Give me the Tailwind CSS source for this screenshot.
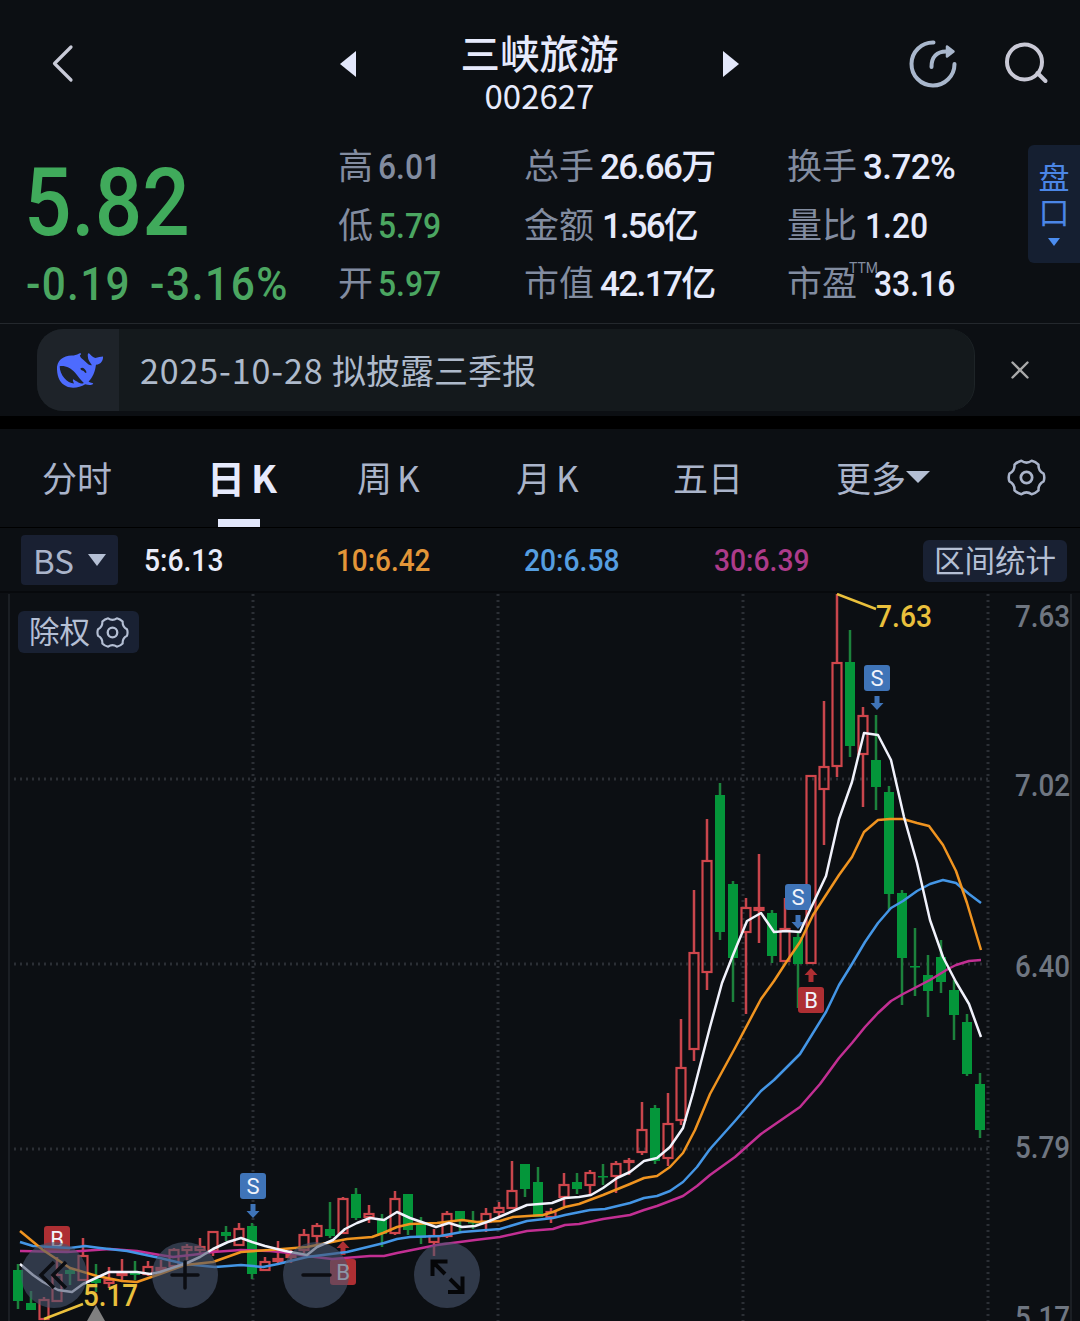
<!DOCTYPE html>
<html lang="zh-CN">
<head>
  <meta charset="UTF-8" />
  <meta name="viewport" content="width=device-width, initial-scale=1.0" />
  <title>三峡旅游 002627</title>
  <script src="https://cdn.jsdelivr.net/npm/@tailwindcss/browser@4"></script>
</head>
<body class="bg-[#0c0f13] w-[1080px] h-[1321px] overflow-hidden font-['Roboto','Noto_Sans_CJK_SC',sans-serif] text-[#aab4ca]">

  <svg class="hidden">
    <symbol id="gear" viewBox="-20 -20 40 40">
      <path d="M17.5-4Q19 0 17.5 4Q11.9 6.9 12.3 13.2Q9.3 16.2 5.3 17.2Q0 13.4-5.3 17.2Q-9.3 16.2-12.3 13.2Q-11.9 6.9-17.5 4Q-19 0-17.5-4Q-11.9-6.9-12.3-13.2Q-9.3-16.2-5.3-17.2Q0-13.4 5.3-17.2Q9.3-16.2 12.3-13.2Q11.9-6.9 17.5-4Z" fill="none" stroke="currentColor" stroke-width="2.6" stroke-linejoin="round" />
      <circle r="5.8" fill="none" stroke="currentColor" stroke-width="2.8" />
    </symbol>
  </svg>

  <!-- Header -->
  <header class="h-[130px] flex items-start">
    <svg class="ml-[50px] mt-[43px] w-6 h-10 mr-[266px]" viewBox="0 0 24 40" fill="none" stroke="#c9cbd8" stroke-width="3.2" stroke-linecap="round" stroke-linejoin="round"><path d="M21 4L4.500 20.500L21 37" /></svg>
    <svg class="mt-[51px] w-4 h-[26px]" viewBox="0 0 16 26" fill="#e4e8fb"><path d="M16 0V26L0 13Z" /></svg>
    <div class="w-[367px] flex flex-col items-center text-[#e6eafc] font-['Noto_Sans_CJK_SC',sans-serif]">
      <h1 class="mt-[29px] text-[39.500px] leading-[46px] font-medium">三峡旅游</h1>
      <div class="text-[33px] leading-10">002627</div>
    </div>
    <svg class="mt-[51px] w-4 h-[26px]" viewBox="0 0 16 26" fill="#e4e8fb"><path d="M0 0V26L16 13Z" /></svg>
    <svg class="ml-[168px] mt-[38px] w-[52px] h-[52px]" viewBox="0 0 52 52" fill="none" stroke="#a9b7cc" stroke-width="4" stroke-linecap="round">
      <path d="M26.500 4.500A21.500 21.500 0 1 0 47.500 26" />
      <path d="M24.500 29C24.500 19 30 13.500 39 13.500" />
      <path d="M40 8.500L46.500 13.500L40 18.500Z" fill="#a9b7cc" stroke-width="2.500" stroke-linejoin="round" />
    </svg>
    <svg class="ml-[43px] mt-[40px] w-[48px] h-[46px]" viewBox="0 0 48 46" fill="none" stroke="#c9c9d6" stroke-width="4" stroke-linecap="round"><circle cx="22.500" cy="22" r="17.500" /><path d="M35.500 33L43.500 41" /></svg>
  </header>

  <!-- Quote -->
  <section class="h-[194px] flex border-b border-[#24282d]">
    <div class="w-[338px] pl-6 text-[#40aa5b]">
      <div class="mt-[19px] text-[95px] leading-[108px] h-[108px] font-medium w-[200px] origin-left scale-x-[.88]">5.82</div>
      <div class="mt-[2px] flex text-[47px] leading-[50px] font-medium text-[#4ba661]">
        <span class="w-[124px] ml-[2px]"><span class="block origin-left scale-x-[.9] tracking-[1.500px]">-0.19</span></span>
        <span class="block origin-left scale-x-[.9] tracking-[1.800px]">-3.16%</span>
      </div>
    </div>
    <div class="w-[187px] pt-[9px] text-[35px] leading-[58.500px] text-[#828ca0]">
      <div class="flex"><span class="w-10">高</span><span class="font-medium block origin-left scale-x-[.91]">6.01</span></div>
      <div class="flex"><span class="w-10">低</span><span class="font-medium block origin-left scale-x-[.91] text-[#4ba661]">5.79</span></div>
      <div class="flex"><span class="w-10">开</span><span class="font-medium block origin-left scale-x-[.91] text-[#4ba661]">5.97</span></div>
    </div>
    <div class="w-[262px] pt-[9px] text-[35px] leading-[58.500px] text-[#828ca0]">
      <div class="flex"><span class="w-[75px] -ml-px mr-px">总手</span><span class="font-medium text-[#e6eafc] tracking-[-1.600px]">26.66万</span></div>
      <div class="flex"><span class="w-[77px] -ml-px mr-px">金额</span><span class="font-medium text-[#e6eafc] tracking-[-1.900px]">1.56亿</span></div>
      <div class="flex"><span class="w-[75px] -ml-px mr-px">市值</span><span class="font-medium text-[#e6eafc] tracking-[-1.600px]">42.17亿</span></div>
    </div>
    <div class="w-[241px] pt-[9px] text-[35px] leading-[58.500px] text-[#828ca0]">
      <div class="flex"><span class="w-[76px]">换手</span><span class="font-medium text-[#e6eafc] tracking-[-.6px]">3.72%</span></div>
      <div class="flex"><span class="w-[78px]">量比</span><span class="font-medium text-[#e6eafc] block origin-left scale-x-[.91]">1.20</span></div>
      <div class="flex relative"><span class="w-[87px]">市盈</span><span class="absolute left-[62px] top-[2px] text-[14px] leading-5">TTM</span><span class="font-medium text-[#e6eafc] block origin-left scale-x-[.91]">33.16</span></div>
    </div>
    <div class="mt-[15px] w-[52px] h-[118px] rounded-l-md bg-[#151f31] text-[#4b86e6] flex flex-col items-center pt-[16px] text-[31px] leading-[35px]">
      <span>盘</span><span>口</span>
      <svg class="mt-[7px] w-3 h-2" viewBox="0 0 12 8" fill="#4b8df0"><path d="M0 0H12L6 8Z" /></svg>
    </div>
  </section>

  <!-- Notice -->
  <section class="h-[92px] pt-[5px] pl-[37px] flex">
    <div class="flex w-[938px] h-[82px] rounded-[26px] overflow-hidden bg-[#14191c] border-r border-[#1e2427]">
      <div class="w-[82px] bg-[#1e2329] flex items-center justify-center">
        <svg class="w-[48px] h-[37px] ml-1" viewBox="49 37 143 108" fill="#4d6bfe" fill-rule="evenodd">
          <path d="M52 88C50 62 70 46 96 46C104 46 110 44 118 40C126 38 125 42 120 46C122 54 128 56 136 64C146 74 150 76 156 75C150 66 144 60 144 50C143 44 144 38 148 40C152 44 156 50 166 54C174 50 182 50 189 49C190 60 184 72 168 74C166 94 158 112 146 124C150 128 158 128 160 130C158 135 148 136 136 132C120 142 96 146 80 138C62 130 53 112 52 88ZM60 78C60 104 82 128 103 130C100 124 98 120 100 117C104 118 106 122 112 124C116 128 124 132 132 128C122 120 114 108 106 98C94 84 78 76 60 78ZM122 84C122 90 126 90 130 92C134 94 136 102 140 96C136 84 128 80 122 84Z" />
        </svg>
      </div>
      <div class="pl-[21px] text-[34px] leading-[81px] font-['Noto_Sans_CJK_SC',sans-serif] text-[#aebacb]"><span class="tracking-[.9px]">2025-10-28 </span>拟披露三季报</div>
    </div>
    <svg class="ml-[36px] mt-[32px] w-[18px] h-[18px]" viewBox="0 0 18 18" stroke="#a9a9a9" stroke-width="2.400" stroke-linecap="round"><path d="M1.500 1.500L16.500 16.500M16.500 1.500L1.500 16.500" /></svg>
  </section>
  <div class="h-[13px] bg-black"></div>

  <!-- Period tabs -->
  <nav class="h-[99px] flex text-[35px] leading-[96px] border-b border-black font-['Noto_Sans_CJK_SC',sans-serif]">
    <span class="pl-[42px] w-[207px]">分时</span>
    <div class="w-[150px] flex flex-col text-[#e6eafc]">
      <span class="h-[90px] text-[38px] leading-[95px] font-bold tracking-[2px]">日<span class="ml-1">K</span></span>
      <span class="ml-[11px] w-[42px] h-2 bg-[#e2e7fb]"></span>
    </div>
    <span class="w-[159px] tracking-[2px]">周<span class="ml-[3px]">K</span></span>
    <span class="w-[157px] tracking-[2px]">月<span class="ml-[3px]">K</span></span>
    <span class="w-[163px]">五日</span>
    <span class="w-[70px]">更多</span>
    <svg class="mt-[42px] w-6 h-3" viewBox="0 0 24 12" fill="#b4bfd4"><path d="M0 0H24L12 12Z" /></svg>
    <svg class="ml-[77px] mt-[29px] w-[39px] h-[39px]"><use href="#gear" /></svg>
  </nav>

  <!-- Moving averages -->
  <section class="h-[65px] flex items-center pl-[21px] text-[31px] leading-[36px] font-medium border-b-2 border-[#07090c]">
    <div class="w-[97px] h-[50px] mr-[26px] rounded-sm bg-[#192032] flex items-center pl-3 font-['Noto_Sans_CJK_SC',sans-serif] text-[33px] font-normal">BS
      <svg class="ml-[14px] w-[18px] h-3" viewBox="0 0 18 12" fill="#b4bfd4"><path d="M0 0H18L9 12Z" /></svg>
    </div>
    <span class="w-[192px] pt-[3px]"><span class="block origin-left scale-x-[.91] text-[#e9ebf8]">5:6.13</span></span>
    <span class="w-[188px] pt-[3px]"><span class="block origin-left scale-x-[.9] text-[#e39638]">10:6.42</span></span>
    <span class="w-[190px] pt-[3px]"><span class="block origin-left scale-x-[.91] text-[#559ee0]">20:6.58</span></span>
    <span class="w-[209px] pt-[3px]"><span class="block origin-left scale-x-[.91] text-[#ad3b8a]">30:6.39</span></span>
    <div class="w-[144px] h-[42px] mt-[2px] rounded-md bg-[#192133] text-center text-[30.500px] leading-[44px] font-normal text-[#b4bfd4]">区间统计</div>
  </section>

  <!-- Chart -->
  <main class="relative h-[728px]">
    <svg id="chart" class="block w-[1080px] h-[728px]" viewBox="0 593 1080 728">
      <g stroke="#1b1f24" stroke-width="2"><path d="M9 594V1321M1071 594V1321" /></g>
      <g stroke="#2b2f35" stroke-width="3" stroke-dasharray="2 4">
        <path d="M253 594V1321M498 594V1321M743 594V1321M988 594V1321" />
        <path d="M14 779H988M14 964H988M14 1149H988" />
      </g>
      <g id="candles"></g>
      <g id="marks" font-size="22" text-anchor="middle" fill="#f2f4fb" font-family="Roboto, sans-serif"></g>
      <g id="lines" fill="none" stroke-width="2.500" stroke-linejoin="round"></g>
      <g stroke="#eac03c" stroke-width="2.500"><path d="M837 594L876 609M44 1319L83 1304" /></g>
      <path d="M96 1305L105 1321H87Z" fill="#808080" />
      <g font-size="32" font-weight="500" font-family="Roboto, sans-serif">
        <g fill="#6f7681">
          <text x="1015" y="627" textLength="55" lengthAdjust="spacingAndGlyphs">7.63</text>
          <text x="1015" y="796" textLength="55" lengthAdjust="spacingAndGlyphs">7.02</text>
          <text x="1015" y="977" textLength="55" lengthAdjust="spacingAndGlyphs">6.40</text>
          <text x="1015" y="1158" textLength="55" lengthAdjust="spacingAndGlyphs">5.79</text>
          <text x="1015" y="1328" textLength="55" lengthAdjust="spacingAndGlyphs">5.17</text>
        </g>
        <text x="876" y="627" fill="#eac03c" textLength="56" lengthAdjust="spacingAndGlyphs">7.63</text>
      </g>
    </svg>

    <div class="absolute left-[18px] top-[18px] w-[121px] h-[42px] rounded-md bg-[#192133] flex items-center pl-[11px] text-[30.500px] leading-[44px] text-[#b4bfd4]"><span class="pt-[2px]">除权</span>
      <svg class="ml-[6px] w-[33px] h-[33px]"><use href="#gear" /></svg>
    </div>

    <div class="absolute left-[21px] top-[649px] flex gap-[65px]">
      <div class="w-[66px] h-[66px] rounded-full bg-[#4a556e]/60">
        <svg class="w-full h-full" viewBox="0 0 66 66" fill="none" stroke="#0b0d12" stroke-width="3.500"><path d="M33 20L20 33L33 46M45 20L32 33L45 46" /></svg>
      </div>
      <div class="w-[66px] h-[66px] rounded-full bg-[#4a556e]/60">
        <svg class="w-full h-full" viewBox="0 0 66 66" fill="none" stroke="#0b0d12" stroke-width="3.500" stroke-linecap="round"><path d="M20 33H46M33 20V46" /></svg>
      </div>
      <div class="w-[66px] h-[66px] rounded-full bg-[#4a556e]/60">
        <svg class="w-full h-full" viewBox="0 0 66 66" fill="none" stroke="#0b0d12" stroke-width="3.500" stroke-linecap="round"><path d="M20 33H47" /></svg>
      </div>
      <div class="w-[66px] h-[66px] rounded-full bg-[#4a556e]/60">
        <svg class="w-full h-full" viewBox="0 0 66 66" fill="none" stroke="#050608" stroke-width="4"><path d="M18.500 34V19.500H33.500M19 20L31 32M34 50H48.500V34.500M48 49L36 37" /></svg>
      </div>
    </div>
    <svg class="absolute left-[80px] top-[680px] w-[60px] h-[40px]" font-size="32" font-weight="500" font-family="Roboto, sans-serif" fill="#eac03c"><text x="3" y="33" textLength="55" lengthAdjust="spacingAndGlyphs">5.17</text></svg>
  </main>

  <script>
    // [up?, high, body top, body bottom, low]
    const candles = [
      [0,1264,1270,1301,1309],[0,1291,1303,1310,1310],[1,1297,1299,1319,1319],[1,1257,1274,1301,1301],[0,1268,1270,1274,1285],
      [1,1238,1255,1280,1281],[0,1264,1279,1283,1292],[1,1267,1279,1283,1288],[1,1259,1273,1275,1281],[0,1261,1273,1275,1280],
      [1,1261,1266,1274,1276],[1,1260,1267,1270,1271],[1,1248,1249,1266,1266],[1,1244,1246,1250,1260],[1,1238,1246,1250,1253],
      [1,1231,1231,1251,1256],[0,1226,1232,1236,1241],[1,1223,1228,1245,1245],[0,1223,1226,1274,1279],[1,1257,1261,1270,1271],
      [1,1241,1258,1261,1265],[1,1250,1254,1257,1263],[1,1229,1234,1250,1253],[1,1223,1225,1236,1244],[0,1202,1229,1236,1238],
      [1,1197,1198,1233,1233],[0,1188,1194,1218,1220],[1,1205,1213,1217,1223],[0,1214,1219,1234,1247],[1,1191,1198,1233,1235],
      [0,1194,1194,1230,1235],[0,1217,1223,1238,1244],[1,1229,1235,1242,1256],[1,1211,1213,1236,1238],[0,1211,1211,1220,1232],
      [0,1211,1222,1223,1229],[1,1208,1213,1222,1232],[1,1202,1207,1212,1217],[1,1161,1190,1208,1208],[0,1164,1164,1189,1197],
      [0,1167,1182,1217,1217],[1,1208,1211,1217,1223],[1,1173,1184,1197,1206],[0,1173,1182,1189,1194],[1,1170,1172,1185,1195],
      [0,1164,1176,1177,1185],[1,1161,1163,1176,1193],[1,1158,1160,1162,1175],[1,1102,1129,1152,1155],[0,1105,1108,1161,1164],
      [1,1093,1123,1158,1166],[1,1019,1067,1120,1125],[1,890,952,1049,1061],[1,819,860,972,990],[0,783,795,932,940],
      [0,881,884,958,1002],[1,898,907,932,1014],[1,854,907,910,943],[0,910,913,956,963],[1,898,928,961,961],
      [0,933,937,964,1008],[1,775,775,963,963],[1,701,766,789,845],[1,594,662,766,777],[0,630,662,746,757],
      [1,707,715,754,807],[0,715,760,787,810],[0,786,792,894,910],[0,890,893,958,1005],[0,928,966,967,996],
      [0,955,975,991,1017],[0,940,957,982,993],[0,980,990,1015,1040],[0,1014,1022,1074,1076],[0,1073,1084,1130,1138]
    ];

    const averages = {
      "#c22f93": "20,1251 67,1252 110,1249 137,1251 160,1255 173,1257 200,1254 213,1252 241,1250 270,1251 290,1253 307,1256 332,1259 370,1256 384,1256 397,1253 437,1245 475,1240 500,1237 527,1231 553,1229 565,1225 579,1224 603,1219 630,1215 644,1210 657,1206 683,1196 697,1186 710,1175 735,1157 761,1134 800,1107 820,1084 839,1058 852,1043 865,1027 878,1013 891,1001 903,994 930,980 948,969 956,965 969,961 981,960",
      "#4496e6": "20,1242 33,1246 70,1248 85,1246 100,1248 127,1251 160,1258 185,1264 215,1267 241,1265 263,1267 278,1264 307,1257 347,1252 384,1243 397,1239 410,1237 440,1236 462,1232 500,1229 527,1221 553,1218 565,1215 590,1210 605,1209 630,1203 644,1198 657,1196 670,1191 683,1182 697,1167 710,1149 735,1121 761,1091 774,1080 800,1054 826,1012 839,985 852,964 865,942 878,923 891,908 903,901 917,891 930,884 943,880 956,883 969,894 981,903",
      "#f09420": "20,1231 43,1250 70,1268 97,1276 122,1281 137,1282 160,1274 185,1265 213,1262 241,1252 270,1250 307,1247 347,1239 372,1237 383,1233 397,1227 410,1224 437,1223 462,1220 477,1222 500,1221 513,1217 543,1215 553,1212 565,1207 579,1204 603,1195 630,1184 644,1178 657,1176 670,1167 683,1153 695,1130 710,1094 723,1070 735,1048 761,999 774,981 787,961 800,942 813,915 839,875 852,857 864,832 878,820 890,819 903,819 917,823 929,826 943,845 956,871 967,903 981,950",
      "#f1f2fc": "20,1264 33,1275 43,1282 58,1290 72,1292 83,1284 109,1272 137,1272 150,1274 160,1272 187,1263 200,1257 213,1249 228,1242 241,1238 252,1242 265,1246 285,1251 307,1255 317,1247 333,1240 345,1229 357,1223 370,1218 384,1220 397,1212 410,1218 436,1227 449,1223 462,1227 475,1226 487,1222 513,1211 527,1205 552,1203 565,1198 579,1197 591,1195 603,1188 617,1178 630,1172 644,1161 657,1158 670,1147 683,1128 693,1093 710,1027 722,983 733,955 747,921 761,913 774,932 786,931 800,932 810,910 826,876 839,819 852,782 864,733 878,735 891,760 904,817 917,863 930,920 943,957 956,982 969,1004 981,1037"
    };

    // [letter, x, badge centre y, arrow tip y]
    const marks = [
      ["B", 57, 1239, 0], ["S", 253, 1186, 1218], ["B", 343, 1272, 1241],
      ["S", 798, 897, 929], ["B", 811, 1000, 968], ["S", 877, 678, 710]
    ];

    document.getElementById("candles").innerHTML = candles.map(([up, high, top, bottom, low], i) => {
      const x = 18 + i * 13;
      if (!up) {
        return `<path d="M${x} ${high}V${low}" stroke="#1c823c" stroke-width="2.5"/>
          <rect x="${x - 5}" y="${top}" width="10" height="${Math.max(bottom - top, 1.5)}" fill="#04963a"/>`;
      }
      return `<path d="M${x} ${high}V${top}M${x} ${bottom}V${low}" stroke="#c8454c" stroke-width="2.5"/>
        <rect x="${x - 4.5}" y="${top + 1}" width="9" height="${Math.max(bottom - top - 1, 1)}" fill="none" stroke="#cf464c" stroke-width="2.2"/>`;
    }).join("");

    document.getElementById("lines").innerHTML = Object.entries(averages)
      .map(([color, points]) => `<polyline points="${points}" stroke="${color}"/>`).join("");

    document.getElementById("marks").innerHTML = marks.map(([letter, x, y, tip]) => {
      const color = letter === "S" ? "#3f74b8" : "#ae2f33";
      const d = letter === "S" ? -1 : 1;
      const arrow = tip ? `<path d="M${x} ${tip}l6.500 ${7 * d}h-4v${7 * d}h-5v${-7 * d}h-4z" fill="${color}"/>` : "";
      return `${arrow}<rect x="${x - 13}" y="${y - 13}" width="26" height="26" rx="3" fill="${color}"/>
        <text x="${x}" y="${y + 7.5}">${letter}</text>`;
    }).join("");
  </script>
</body>
</html>
